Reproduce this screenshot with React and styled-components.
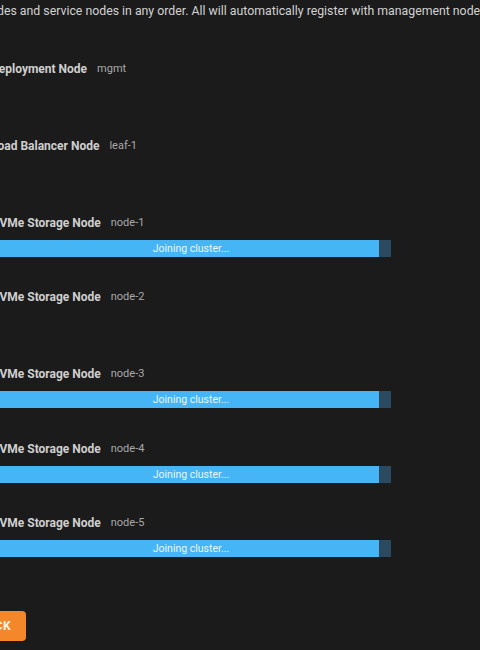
import React from 'react';
import styled, { createGlobalStyle } from 'styled-components';

const GlobalStyle = createGlobalStyle`
  html, body {
    margin: 0;
    padding: 0;
    background: #1b1b1b;
    overflow: hidden;
  }
  body {
    font-family: Roboto, "Liberation Sans", sans-serif;
  }
`;

const Page = styled.div`
  width: 480px;
  height: 650px;
  overflow: hidden;
  background: #1b1b1b;
`;

const Content = styled.div`
  margin-left: -9px;
  width: 400px;
  padding-top: 3px;
`;

const Intro = styled.p`
  margin: 0 0 0 -125px;
  white-space: nowrap;
  font-size: 12.3px;
  line-height: 16px;
  color: #d2d2d2;
`;

const NodeList = styled.div`
  display: flex;
  flex-direction: column;
  margin-top: 41.5px;
`;

const Row = styled.div`
  display: flex;
  flex-direction: column;
  padding-bottom: ${p => (p.$hasBar ? 32.5 : 61)}px;
`;

const TitleRow = styled.div`
  display: flex;
  align-items: center;
  gap: 10px;
  height: 16px;
  line-height: 16px;
`;

const NodeType = styled.span`
  font-size: 12px;
  font-weight: 700;
  color: #cfcfcf;
`;

const Host = styled.span`
  font-size: 11px;
  color: #a9a9a9;
`;

const Track = styled.div`
  position: relative;
  margin-top: 9px;
  height: 17px;
  width: 400px;
  background: #2b4a5f;
`;

const Fill = styled.div`
  height: 100%;
  background: #45b5f6;
`;

const BarLabel = styled.span`
  position: absolute;
  inset: 0;
  display: flex;
  align-items: center;
  justify-content: center;
  font-size: 10.5px;
  color: #eaf6ff;
`;

const Footer = styled.div`
  margin-top: 21px;
  margin-left: -28px;
`;

const BackButton = styled.button`
  height: 30px;
  padding: 0 15px;
  border: none;
  border-radius: 4px;
  background: #f5872b;
  color: #fff4e8;
  font-family: Roboto, "Liberation Sans", sans-serif;
  font-size: 12px;
  font-weight: 700;
  letter-spacing: 0.5px;
  cursor: pointer;
`;

const nodes = [
  { type: 'Deployment Node', host: 'mgmt' },
  { type: 'Load Balancer Node', host: 'leaf-1' },
  { type: 'NVMe Storage Node', host: 'node-1', progress: 97 },
  { type: 'NVMe Storage Node', host: 'node-2' },
  { type: 'NVMe Storage Node', host: 'node-3', progress: 97 },
  { type: 'NVMe Storage Node', host: 'node-4', progress: 97 },
  { type: 'NVMe Storage Node', host: 'node-5', progress: 97 },
];

const App = () => {
  return (
    <Page>
      <GlobalStyle />
      <Content>
        <Intro>
          Start the deployment nodes and service nodes in any order. All will automatically register with management node
        </Intro>
        <NodeList>
          {nodes.map(n => (
            <Row key={n.host} $hasBar={n.progress != null}>
              <TitleRow>
                <NodeType>{n.type}</NodeType>
                <Host>{n.host}</Host>
              </TitleRow>
              {n.progress != null && (
                <Track>
                  <Fill style={{ width: `${n.progress}%` }} />
                  <BarLabel>Joining cluster...</BarLabel>
                </Track>
              )}
            </Row>
          ))}
        </NodeList>
        <Footer>
          <BackButton>BACK</BackButton>
        </Footer>
      </Content>
    </Page>
  );
};

export default App;
